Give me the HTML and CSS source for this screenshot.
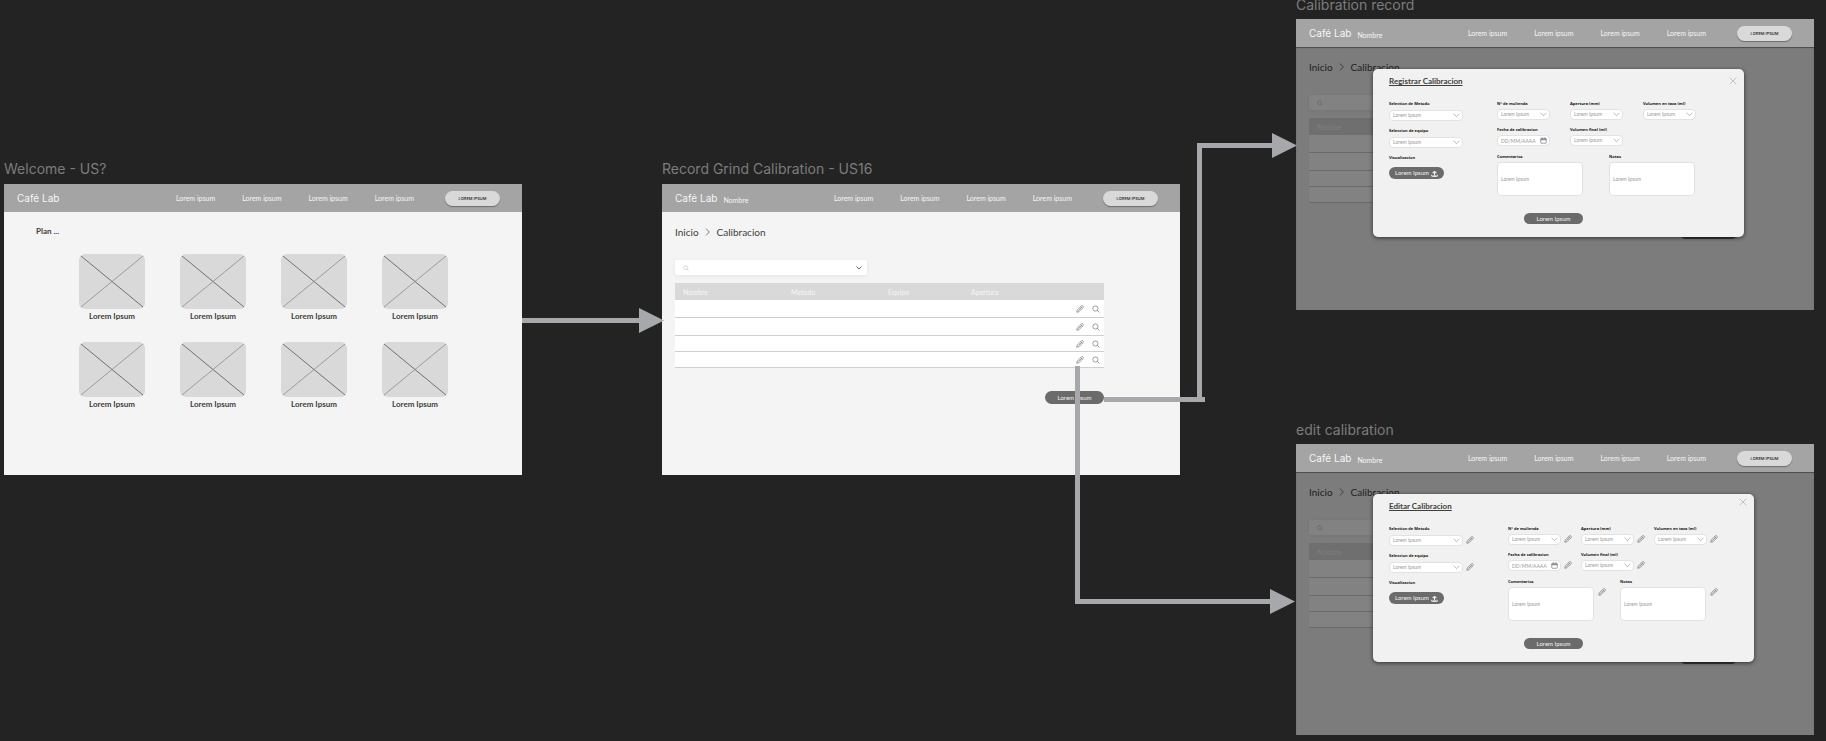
FILE: index.html
```
<!DOCTYPE html>
<html lang="es">
<head>
<meta charset="utf-8">
<title>Café Lab</title>
<link rel="stylesheet" href="styles.css">
</head>
<body>
<svg class="defs" aria-hidden="true">
  <symbol id="i-pencil" viewBox="0 0 16 16"><path d="M1.500 14.500l1-4.500L11 1.500q1.200-1 2.400.2l.8.800q1.200 1.200 0 2.400L6 13.500z M9.500 3.500l3.200 3.200 M5 11l5.500-5.500" /></symbol>
  <symbol id="i-search" viewBox="0 0 16 16"><path d="M12 7A5.200 5.200 0 1 1 1.600 7A5.200 5.200 0 1 1 12 7z M10.600 10.700L15 15" /></symbol>
  <symbol id="i-chev" viewBox="0 0 12 8"><path d="M1 1l5 5 5-5" /></symbol>
  <symbol id="i-close" viewBox="0 0 12 12"><path d="M1 1l10 10M11 1L1 11" /></symbol>
  <symbol id="i-cal" viewBox="0 0 14 14"><path d="M2.500 2.500h9q1 0 1 1v8q0 1-1 1h-9q-1 0-1-1v-8q0-1 1-1zM1.500 4.500h11M1.500 5.500h11M4.500 1v2M9.500 1v2" /></symbol>
  <symbol id="i-up" viewBox="0 0 14 14"><path d="M7 10V3M3.500 5.500L7 2l3.500 3.500zM1.500 9.500v3h11v-3M4 12h6" /></symbol>
  <symbol id="i-cross" viewBox="0 0 66 55"><path d="M2 2l62 51" stroke="#555" stroke-width=".8"/><path d="M64 2L2 53" stroke="#8c8c8c" stroke-width=".8"/></symbol>
</svg>

<main class="canvas">

<section class="node node-welcome">
  <h2 class="node-name">Welcome - US?</h2>
  <div class="frame">
    <header class="bar"><span class="brand">Café Lab</span>
      <nav class="menu"><a href="#">Lorem ipsum</a><a href="#">Lorem ipsum</a><a href="#">Lorem ipsum</a><a href="#">Lorem ipsum</a></nav><button class="pill">LOREM IPSUM</button></header>
    <div class="plan">
      <h3 class="plan-title">Plan ...</h3>
      <div class="gallery">
        <figure class="tile"><svg><use href="#i-cross"/></svg><figcaption>Lorem Ipsum</figcaption></figure>
        <figure class="tile"><svg><use href="#i-cross"/></svg><figcaption>Lorem Ipsum</figcaption></figure>
        <figure class="tile"><svg><use href="#i-cross"/></svg><figcaption>Lorem Ipsum</figcaption></figure>
        <figure class="tile"><svg><use href="#i-cross"/></svg><figcaption>Lorem Ipsum</figcaption></figure>
        <figure class="tile"><svg><use href="#i-cross"/></svg><figcaption>Lorem Ipsum</figcaption></figure>
        <figure class="tile"><svg><use href="#i-cross"/></svg><figcaption>Lorem Ipsum</figcaption></figure>
        <figure class="tile"><svg><use href="#i-cross"/></svg><figcaption>Lorem Ipsum</figcaption></figure>
        <figure class="tile"><svg><use href="#i-cross"/></svg><figcaption>Lorem Ipsum</figcaption></figure>
      </div>
    </div>
  </div>
</section>

<section class="node node-list">
  <h2 class="node-name">Record Grind Calibration - US16</h2>
  <div class="frame">
    <header class="bar"><span class="brand">Café Lab</span><span class="user">Nombre</span>
      <nav class="menu"><a href="#">Lorem ipsum</a><a href="#">Lorem ipsum</a><a href="#">Lorem ipsum</a><a href="#">Lorem ipsum</a></nav><button class="pill">LOREM IPSUM</button></header>
    <div class="list">
      <nav class="crumbs"><a href="#">Inicio</a><svg class="crumb-sep"><use href="#i-chev"/></svg><span>Calibracion</span></nav>
      <div class="search"><svg class="ic-search"><use href="#i-search"/></svg><input aria-label="Buscar"><svg class="ic-drop"><use href="#i-chev"/></svg></div>
      <table class="records">
        <thead><tr><th class="c1">Nombre</th><th class="c2">Metodo</th><th class="c3">Equipo</th><th>Apertura</th><th class="c5"></th></tr></thead>
        <tbody>
          <tr class="tall"><td colspan="4"></td><td><div class="acts"><svg><use href="#i-pencil"/></svg><svg><use href="#i-search"/></svg></div></td></tr>
          <tr class="tall"><td colspan="4"></td><td><div class="acts"><svg><use href="#i-pencil"/></svg><svg><use href="#i-search"/></svg></div></td></tr>
          <tr><td colspan="4"></td><td><div class="acts"><svg><use href="#i-pencil"/></svg><svg><use href="#i-search"/></svg></div></td></tr>
          <tr><td colspan="4"></td><td><div class="acts"><svg><use href="#i-pencil"/></svg><svg><use href="#i-search"/></svg></div></td></tr>
        </tbody>
      </table>
      <button class="btn add">Lorem Ipsum</button>
    </div>
  </div>
</section>

<section class="node node-record">
  <h2 class="node-name">Calibration record</h2>
  <div class="frame">
    <header class="bar"><span class="brand">Café Lab</span><span class="user">Nombre</span>
      <nav class="menu"><a href="#">Lorem ipsum</a><a href="#">Lorem ipsum</a><a href="#">Lorem ipsum</a><a href="#">Lorem ipsum</a></nav><button class="pill">LOREM IPSUM</button></header>
    <div class="list">
      <nav class="crumbs"><a href="#">Inicio</a><svg class="crumb-sep"><use href="#i-chev"/></svg><span>Calibracion</span></nav>
      <div class="search"><svg class="ic-search"><use href="#i-search"/></svg><input aria-label="Buscar"></div>
      <table class="records">
        <thead><tr><th class="c1">Nombre</th><th></th></tr></thead>
        <tbody><tr class="tall"><td></td><td></td></tr><tr class="tall"><td></td><td></td></tr><tr><td></td><td></td></tr><tr><td></td><td></td></tr></tbody>
      </table>
      <button class="btn add" aria-label="Agregar"></button>
    </div>
    <div class="shade"></div>
    <form class="modal">
      <div class="modal-head"><h3>Registrar Calibracion</h3><button type="button" class="close" aria-label="Cerrar"><svg><use href="#i-close"/></svg></button></div>
      <div class="cols">
        <div class="side">
          <div class="field"><label for="r1">Selection de Metodo</label><div class="ctl"><select id="r1"><option>Lorem Ipsum</option></select><svg class="ic"><use href="#i-chev"/></svg></div></div>
          <div class="field"><label for="r2">Seleccion de equipo</label><div class="ctl"><select id="r2"><option>Lorem Ipsum</option></select><svg class="ic"><use href="#i-chev"/></svg></div></div>
          <div class="field"><label for="r3">Visualizacion</label><button type="button" id="r3" class="btn upload">Lorem Ipsum<svg><use href="#i-up"/></svg></button></div>
        </div>
        <div class="main">
          <div class="trio">
            <div class="field"><label for="r4">N° de molienda</label><div class="ctl"><select id="r4"><option>Lorem Ipsum</option></select><svg class="ic"><use href="#i-chev"/></svg></div></div>
            <div class="field"><label for="r5">Apertura (mm)</label><div class="ctl"><select id="r5"><option>Lorem Ipsum</option></select><svg class="ic"><use href="#i-chev"/></svg></div></div>
            <div class="field"><label for="r6">Volumen en taza (ml)</label><div class="ctl"><select id="r6"><option>Lorem Ipsum</option></select><svg class="ic"><use href="#i-chev"/></svg></div></div>
            <div class="field"><label for="r7">Fecha de calibracion</label><div class="ctl"><input id="r7" placeholder="DD/MM/AAAA"><svg class="ic cal"><use href="#i-cal"/></svg></div></div>
            <div class="field"><label for="r8">Volumen final (ml)</label><div class="ctl"><select id="r8"><option>Lorem Ipsum</option></select><svg class="ic"><use href="#i-chev"/></svg></div></div>
          </div>
          <div class="duo">
            <div class="field"><label for="r9">Comentarios</label><textarea id="r9" placeholder="Lorem Ipsum"></textarea></div>
            <div class="field"><label for="r10">Notas</label><textarea id="r10" placeholder="Lorem Ipsum"></textarea></div>
          </div>
        </div>
      </div>
      <button type="button" class="btn send">Lorem Ipsum</button>
    </form>
  </div>
</section>

<section class="node node-edit">
  <h2 class="node-name">edit calibration</h2>
  <div class="frame">
    <header class="bar"><span class="brand">Café Lab</span><span class="user">Nombre</span>
      <nav class="menu"><a href="#">Lorem ipsum</a><a href="#">Lorem ipsum</a><a href="#">Lorem ipsum</a><a href="#">Lorem ipsum</a></nav><button class="pill">LOREM IPSUM</button></header>
    <div class="list">
      <nav class="crumbs"><a href="#">Inicio</a><svg class="crumb-sep"><use href="#i-chev"/></svg><span>Calibracion</span></nav>
      <div class="search"><svg class="ic-search"><use href="#i-search"/></svg><input aria-label="Buscar"></div>
      <table class="records">
        <thead><tr><th class="c1">Nombre</th><th></th></tr></thead>
        <tbody><tr class="tall"><td></td><td></td></tr><tr class="tall"><td></td><td></td></tr><tr><td></td><td></td></tr><tr><td></td><td></td></tr></tbody>
      </table>
      <button class="btn add" aria-label="Agregar"></button>
    </div>
    <div class="shade"></div>
    <form class="modal wide">
      <div class="modal-head"><h3>Editar Calibracion</h3><button type="button" class="close" aria-label="Cerrar"><svg><use href="#i-close"/></svg></button></div>
      <div class="cols">
        <div class="side">
          <div class="field"><label for="e1">Selection de Metodo</label><div class="edit"><div class="ctl"><select id="e1"><option>Lorem Ipsum</option></select><svg class="ic"><use href="#i-chev"/></svg></div><svg class="pen"><use href="#i-pencil"/></svg></div></div>
          <div class="field"><label for="e2">Seleccion de equipo</label><div class="edit"><div class="ctl"><select id="e2"><option>Lorem Ipsum</option></select><svg class="ic"><use href="#i-chev"/></svg></div><svg class="pen"><use href="#i-pencil"/></svg></div></div>
          <div class="field"><label for="e3">Visualizacion</label><button type="button" id="e3" class="btn upload">Lorem Ipsum<svg><use href="#i-up"/></svg></button></div>
        </div>
        <div class="main">
          <div class="trio">
            <div class="field"><label for="e4">N° de molienda</label><div class="edit"><div class="ctl"><select id="e4"><option>Lorem Ipsum</option></select><svg class="ic"><use href="#i-chev"/></svg></div><svg class="pen"><use href="#i-pencil"/></svg></div></div>
            <div class="field"><label for="e5">Apertura (mm)</label><div class="edit"><div class="ctl"><select id="e5"><option>Lorem Ipsum</option></select><svg class="ic"><use href="#i-chev"/></svg></div><svg class="pen"><use href="#i-pencil"/></svg></div></div>
            <div class="field"><label for="e6">Volumen en taza (ml)</label><div class="edit"><div class="ctl"><select id="e6"><option>Lorem Ipsum</option></select><svg class="ic"><use href="#i-chev"/></svg></div><svg class="pen"><use href="#i-pencil"/></svg></div></div>
            <div class="field"><label for="e7">Fecha de calibracion</label><div class="edit"><div class="ctl"><input id="e7" placeholder="DD/MM/AAAA"><svg class="ic cal"><use href="#i-cal"/></svg></div><svg class="pen"><use href="#i-pencil"/></svg></div></div>
            <div class="field"><label for="e8">Volumen final (ml)</label><div class="edit"><div class="ctl"><select id="e8"><option>Lorem Ipsum</option></select><svg class="ic"><use href="#i-chev"/></svg></div><svg class="pen"><use href="#i-pencil"/></svg></div></div>
          </div>
          <div class="duo">
            <div class="field"><label for="e9">Comentarios</label><div class="edit"><textarea id="e9" placeholder="Lorem Ipsum"></textarea><svg class="pen"><use href="#i-pencil"/></svg></div></div>
            <div class="field"><label for="e10">Notas</label><div class="edit"><textarea id="e10" placeholder="Lorem Ipsum"></textarea><svg class="pen"><use href="#i-pencil"/></svg></div></div>
          </div>
        </div>
      </div>
      <button type="button" class="btn send">Lorem Ipsum</button>
    </form>
  </div>
</section>

<svg class="links" aria-hidden="true">
  <g fill="none" stroke="#a7a8ab" stroke-width="5">
    <path d="M522 320.500H640"/>
    <path d="M1104 399.500H1205M1199.500 402V145.500H1273"/>
    <path d="M1077.500 366V604M1075 601.500H1271"/>
  </g>
  <g fill="#a7a8ab">
    <path d="M639 308l25 12.500-25 12.500z"/>
    <path d="M1272 133l25 12.500-25 12.500z"/>
    <path d="M1270 589l25 12.500-25 12.500z"/>
  </g>
</svg>
</main>
</body>
</html>
```

FILE: styles.css
```
* { box-sizing: border-box; margin: 0; padding: 0; }
body { background: #232323; font-family: Lato, "Open Sans", sans-serif; }
button, input, select, textarea { font-family: inherit; border: 0; outline: 0; }
a { color: inherit; text-decoration: none; }
svg { display: block; fill: none; stroke: currentColor; }
.defs { position: absolute; width: 0; height: 0; }
.canvas { position: relative; height: 100vh; overflow: hidden; }
.links { position: absolute; inset: 0; width: 100%; height: 100%; stroke: none; pointer-events: none; }

/* canvas nodes */
.node { position: absolute; width: 518px; }
.node-welcome { left: 4px; top: 160px; }
.node-list { left: 662px; top: 160px; }
.node-record { left: 1296px; top: -4px; }
.node-edit { left: 1296px; top: 421px; }
.node-name { font: 400 14px/18px Inter, sans-serif; color: #7c7c7c; margin-bottom: 5px; white-space: nowrap; }
.node-welcome .frame, .node-list .frame { margin-top: 6px; }
.frame { position: relative; min-height: 291px; background: #f4f4f4; }

/* top bar */
.bar { display: flex; align-items: center; height: 28px; padding: 0 22px 0 13px; background: #a4a4a4; color: #f6f6f6; }
.brand { font: 400 10px/12px Inter, sans-serif; }
.user { font-size: 7px; line-height: 8px; margin: 4px 0 0 6px; }
.menu { display: flex; gap: 27px; margin-left: auto; font-size: 7px; line-height: 10px; white-space: nowrap; }
.pill { width: 55px; height: 15px; margin-left: 31px; border-radius: 8px; background: #d9d9d9; color: #222; font: 500 4px/15px Inter, sans-serif; box-shadow: 0 1px 1px #0005; }

/* welcome */
.plan { padding: 14px 32px; color: #40403a; }
.plan-title { font-size: 8px; line-height: 10px; font-weight: 700; }
.gallery { display: grid; grid-template-columns: repeat(4, 66px); gap: 21px 35px; margin: 18px 0 0 43px; }
.tile svg { width: 66px; height: 55px; border-radius: 6px; background: #d9d9d9; }
.tile figcaption { margin-top: 2px; font-size: 8px; line-height: 10px; font-weight: 700; text-align: center; }

/* list */
.list { padding: 14px 76px 0 13px; }
.crumbs { display: flex; align-items: center; font-size: 10px; line-height: 12px; color: #40403a; }
.crumb-sep { width: 8px; height: 6px; margin: 0 5px; transform: rotate(-90deg); }
.search { display: flex; align-items: center; width: 192px; height: 15px; margin-top: 22px; padding: 0 5px 0 8px; background: #fff; border-radius: 2px; box-shadow: 0 1px 4px #0001; }
.search input { flex: 1; min-width: 0; height: 11px; background: none; }
.ic-search { width: 6px; height: 6px; color: #999; }
.ic-drop { width: 6px; height: 4px; color: #666; stroke-width: 2; }
.records { width: 100%; margin-top: 8px; border-collapse: separate; border-spacing: 0; table-layout: fixed; background: #fff; }
.records th { height: 17px; padding: 1px 0 0 8px; background: #d9d9d9; color: #f6f6f6; font-size: 7px; line-height: 8px; font-weight: 400; text-align: left; }
.records td { height: 16px; border-bottom: 1px solid #cfcfcf; }
.records .tall td { height: 18px; }
.c1 { width: 108px; }
.c2 { width: 97px; }
.c3 { width: 83px; }
.c5 { width: 34px; }
.acts { display: flex; justify-content: flex-end; gap: 8px; padding-right: 4px; color: #444; }
.acts svg { width: 8px; height: 8px; }
.btn { display: flex; align-items: center; justify-content: center; width: 59px; height: 11px; border-radius: 7px; background: #6b6b6b; color: #f4f4f4; font-size: 6px; line-height: 8px; }
.add { height: 13px; margin: 23px 0 0 auto; }

/* dialog */
.shade { position: absolute; inset: 28px 0 0; background: #0000007d; box-shadow: inset 0 1px 1px #0006; }
.modal { position: absolute; left: 77px; top: 50px; width: 371px; min-height: 168px; padding: 7px 7px 12px 16px; border-radius: 5px; background: #f1f1f1; box-shadow: 0 1px 4px #0009; }
.modal-head { display: flex; justify-content: space-between; align-items: center; height: 10px; }
.modal-head h3 { font-size: 8px; line-height: 10px; color: #40403a; text-decoration: underline; }
.close { width: 8px; height: 8px; background: none; color: #aaa; }
.close svg { width: 8px; height: 8px; }
.wide .close { align-self: flex-start; margin-top: -3px; }
.cols { display: flex; margin-top: 15px; }
.side { display: grid; gap: 7px; width: 108px; flex: none; align-content: start; }
.side .ctl { width: 74px; }
.side .field { gap: 3px; }
.field { display: flex; flex-direction: column; gap: 2px; }
.field label { font-family: "Open Sans", sans-serif; font-size: 4px; line-height: 6px; font-weight: 700; color: #111; white-space: nowrap; }
.ctl { position: relative; width: 53px; height: 11px; }
.ctl select, .ctl input, textarea { display: block; width: 100%; height: 100%; padding: 0 3px; appearance: none; background: #fff; border: 1px solid #e2e2e2; border-radius: 4px; color: #999; font-size: 5px; line-height: 9px; }
::placeholder { color: #999; opacity: 1; }
.ic { position: absolute; right: 3px; top: 3px; width: 7px; height: 5px; color: #888; pointer-events: none; }
.ic.cal { top: 2px; width: 7px; height: 7px; color: #445; }
.upload { width: 55px; height: 12px; gap: 2px; margin-top: 3px; }
.upload svg { width: 7px; height: 7px; stroke-width: 2; }
.trio { display: grid; grid-template-columns: repeat(3, 73px); row-gap: 7px; }
.duo { display: grid; grid-template-columns: repeat(2, 112px); margin-top: 8px; }
.ctl + .pen { margin-left: -1px; }
.duo textarea { width: 86px; height: 34px; padding: 12px 3px; resize: none; overflow: hidden; }
.send { margin: 17px 0 0 135px; }
.wide { width: 381px; }
.wide .side { width: 119px; }
.edit { display: flex; gap: 4px; }
.pen { width: 8px; height: 8px; margin-top: 1px; flex: none; color: #444; }
```
